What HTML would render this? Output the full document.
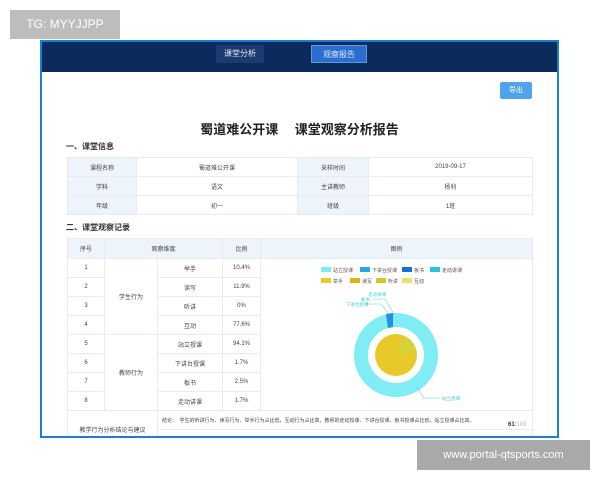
<!DOCTYPE html>
<html><head><meta charset="utf-8"><style>
*{margin:0;padding:0;box-sizing:border-box}
body{width:600px;height:480px;background:#fff;position:relative;overflow:hidden;font-family:"Liberation Sans","Noto Sans CJK SC",sans-serif;color:#333}
.a{position:absolute}
.frame{left:40px;top:40px;width:519px;height:398px;border:2px solid #1a7fd4;background:#fff;overflow:hidden}
.hd{left:0;top:0;width:100%;height:30px;background:#0d2a5c}
.tab{top:3px;height:18px;font-size:8px;color:#dfe8f5;text-align:center;line-height:18px}
table{border-collapse:collapse;font-size:6px;color:#444}
td{border:1px solid #e6ecf2;text-align:center;height:19px}
.lb{background:#edf4fb}
.wm{background:#a9a9a9;color:#fff;font-size:12px;text-align:center}
</style></head><body>
<div class="a wm" style="left:10px;top:10px;width:110px;height:29px;line-height:29px;background:#bdbdbd">TG: MYYJJPP</div>
<div class="a frame">
 <div class="a hd"></div>
 <div class="a tab" style="left:174px;width:48px;background:#1c3b6e">课堂分析</div>
 <div class="a tab" style="left:269px;width:56px;background:#2a6fd0;border:1px solid #5a9ae0">观察报告</div>
 <div class="a" style="left:458px;top:40px;width:32px;height:17px;background:#4fa4ec;color:#fff;font-size:7px;line-height:17px;text-align:center;border-radius:2px">导出</div>
 <div class="a" style="left:0;width:100%;top:77px;text-align:center;font-size:13px;font-weight:bold;color:#222">蜀道难公开课　 课堂观察分析报告</div>
 <div class="a" style="left:24px;top:99px;font-size:8px;font-weight:bold">一、课堂信息</div>
 <table class="a" style="left:25px;top:115px;width:466px">
  <tr><td class="lb" style="width:69px">课程名称</td><td style="width:161px">蜀道难公开课</td><td class="lb" style="width:71px">采样时间</td><td>2019-09-17</td></tr>
  <tr><td class="lb">学科</td><td>语文</td><td class="lb">主讲教师</td><td>杨利</td></tr>
  <tr><td class="lb">年级</td><td>初一</td><td class="lb">班级</td><td>1班</td></tr>
 </table>
 <div class="a" style="left:24px;top:180px;font-size:8px;font-weight:bold">二、课堂观察记录</div>
 <table class="a" style="left:25px;top:196px;width:466px">
  <tr class="lb"><td style="width:37px;height:20px">序号</td><td colspan="2" style="width:118px">观察维度</td><td style="width:38px">比例</td><td>图例</td></tr>
  <tr><td>1</td><td rowspan="4" style="width:53px">学生行为</td><td style="width:65px">举手</td><td>10.4%</td><td rowspan="8"></td></tr>
  <tr><td>2</td><td>读写</td><td>11.9%</td></tr>
  <tr><td>3</td><td>听讲</td><td>0%</td></tr>
  <tr><td>4</td><td>互动</td><td>77.6%</td></tr>
  <tr><td>5</td><td rowspan="4">教师行为</td><td>站立授课</td><td>94.1%</td></tr>
  <tr><td>6</td><td>下讲台授课</td><td>1.7%</td></tr>
  <tr><td>7</td><td>板书</td><td>2.5%</td></tr>
  <tr><td>8</td><td>走动讲课</td><td>1.7%</td></tr>
  <tr><td colspan="2" rowspan="2" style="height:30px">教学行为分析结论与建议</td><td colspan="3" style="text-align:left;padding-left:4px;font-size:5px;white-space:nowrap">结论：　学生的听讲行为、读写行为、举手行为占比低，互动行为占比高，教师的走动授课、下讲台授课、板书授课占比低，站立授课占比高。</td></tr>
  <tr><td colspan="3" style="text-align:left;padding-left:4px;font-size:5px">建议：</td></tr>
 </table>
 <svg class="a" style="left:220px;top:220px" width="280" height="160" viewBox="0 0 280 160">
  <g font-size="5" fill="#555" font-family="Liberation Sans,Noto Sans CJK SC,sans-serif">
   <rect x="59" y="5" width="10" height="5" fill="#7eeaf2"/><text x="71" y="10">站立授课</text>
   <rect x="98" y="5" width="10" height="5" fill="#2aa6e6"/><text x="110" y="10">下讲台授课</text>
   <rect x="140" y="5" width="10" height="5" fill="#1a6fd6"/><text x="152" y="10">板书</text>
   <rect x="168" y="5" width="10" height="5" fill="#29c6d8"/><text x="180" y="10">走动讲课</text>
   <rect x="59" y="16" width="10" height="5" fill="#e6cf25"/><text x="71" y="21">举手</text>
   <rect x="88" y="16" width="10" height="5" fill="#d9b21c"/><text x="100" y="21">读写</text>
   <rect x="114" y="16" width="10" height="5" fill="#d3c82a"/><text x="126" y="21">听讲</text>
   <rect x="140" y="16" width="10" height="5" fill="#f0dc6a"/><text x="152" y="21">互动</text>
  </g>
  <g transform="translate(0,6)">
  <circle cx="134" cy="87" r="35" fill="none" stroke="#80ecf4" stroke-width="14"/>
  <path d="M124,46 L131,45 L131,59 L126,60Z" fill="#2a8ee0"/>
  <circle cx="134" cy="87" r="21" fill="#e8c92a"/>
  <path d="M134,87 L143,68 A21,21 0 0,1 154,83Z" fill="#d7d23a"/>
  <g fill="none" stroke="#6cd" stroke-width="0.6"><path d="M127,46 L119,36 L103,36"/><path d="M132,46 L123,31 L111,31"/><path d="M155,119 L162,130 L179,130"/></g>
  <g font-size="4.5" fill="#4cc" font-family="Liberation Sans,Noto Sans CJK SC,sans-serif"><text x="84" y="38">下讲台授课</text><text x="99" y="33">板书</text><text x="106" y="28">走动讲课</text><text x="180" y="132">站立授课</text></g>
  </g>
 </svg>
 <div class="a" style="left:466px;top:380px;font-size:6px;font-weight:bold">61<span style="color:#ccc">/100</span></div>
</div>
<div class="a wm" style="left:417px;top:440px;width:173px;height:30px;line-height:30px;font-size:11px">www.portal-qtsports.com</div>
</body></html>
